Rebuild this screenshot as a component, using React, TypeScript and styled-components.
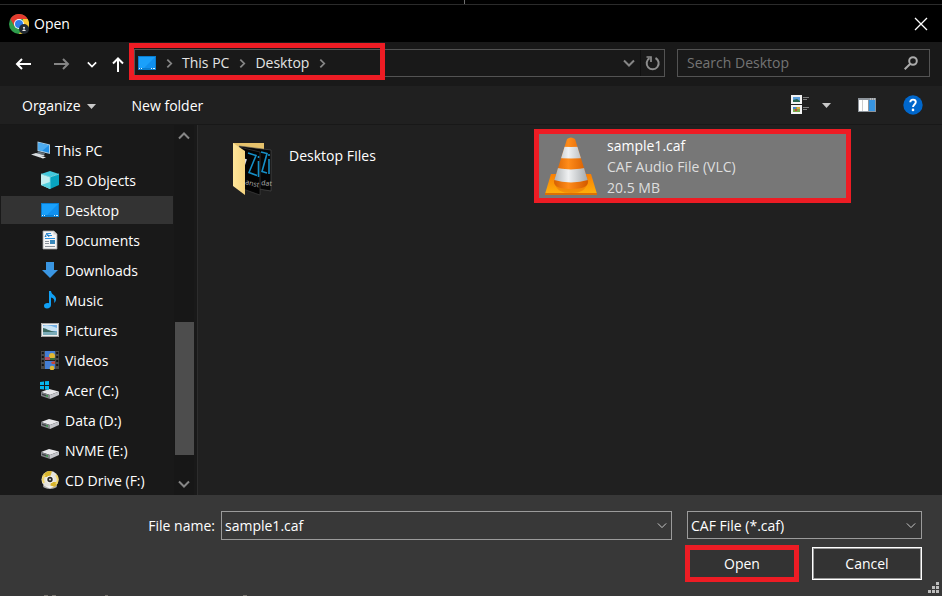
import React from "react";
import styled, { createGlobalStyle, css } from "styled-components";

const RED = "#ed1c24";

const GlobalStyle = createGlobalStyle`
  * { box-sizing: border-box; }
  body { margin: 0; background: #000; }
  body, button, input, select {
    font-family: "Open Sans", "Noto Sans", sans-serif;
    font-size: 14px;
    line-height: 20px;
    color: #fff;
  }
  button { padding: 0; border: 0; background: none; }
  svg { display: block; flex: none; }
`;

const Dialog = styled.main`
  position: relative;
  display: flex;
  flex-direction: column;
  height: 100vh;
  overflow: hidden;
  background: #202020;
`;

const TopEdge = styled.div`
  height: 5px;
  flex: none;
  display: flex;
  justify-content: center;
  padding-right: 14px;
  background: #000;
  border-bottom: 1px solid #2b2b2b;
`;

const EdgeTick = styled.span`
  width: 1px;
  height: 4px;
  background: #707070;
`;

const TitleBar = styled.header`
  height: 37px;
  flex: none;
  display: flex;
  align-items: center;
  gap: 5px;
  padding: 0 14px 0 9px;
  background: #000;
`;

const Title = styled.h1`
  flex: 1;
  margin: 0;
  font-size: 14px;
  font-weight: 400;
`;

const IconButton = styled.button`
  display: flex;
  align-items: center;
  justify-content: center;
`;

const NavBar = styled.nav`
  height: 44px;
  flex: none;
  display: flex;
  align-items: center;
  padding: 0 12px 2px 15px;
  background: #191919;
`;

const NavButtons = styled.div`
  display: flex;
  align-items: center;
  width: 119px;
  padding-top: 2px;
  gap: 23px;
`;

const NavTail = styled.div`
  display: flex;
  align-items: center;
  gap: 13px;
  margin-left: -6px;
`;

const AddressBar = styled.div`
  position: relative;
  flex: 1;
  height: 28px;
  display: flex;
  align-items: center;
  padding: 0 0 0 3px;
  border: 1px solid #535353;
`;

const Crumbs = styled.div`
  flex: 1;
  display: flex;
  align-items: center;
  gap: 10px;
`;

const CrumbButton = styled.button`
  margin-left: -1px;
  color: #e4e4e4;
`;

const RefreshButton = styled(IconButton)`
  width: 24px;
  height: 26px;
  margin-left: 5px;
  border-left: 1px solid #101010;
`;

const Highlight = styled.span<{ $area: "path" | "file" }>`
  position: absolute;
  border: 5px solid ${RED};
  pointer-events: none;
  ${(p) =>
    p.$area === "path"
      ? css`
          left: -6px;
          top: -7px;
          width: 256px;
          height: 37px;
        `
      : css`
          inset: -5px;
        `}
`;

const SearchBox = styled.label`
  width: 253px;
  height: 28px;
  margin-left: 12px;
  display: flex;
  align-items: center;
  padding: 0 11px 0 9px;
  border: 1px solid #535353;
`;

const SearchInput = styled.input`
  flex: 1;
  min-width: 0;
  padding: 0;
  border: 0;
  outline: 0;
  background: none;
  &::placeholder { color: #747474; opacity: 1; }
`;

const ToolBar = styled.div`
  height: 39px;
  flex: none;
  display: flex;
  align-items: center;
  padding: 2px 19px 0 22px;
  border-bottom: 1px solid #181818;
`;

const MenuButton = styled.button`
  display: flex;
  align-items: center;
  gap: 6px;
  margin-right: 36px;
`;

const ToolIcons = styled.div`
  display: flex;
  align-items: center;
  margin-left: auto;
  padding-bottom: 2px;
  gap: 27px;
`;

const ViewButton = styled(IconButton)`
  gap: 12px;
`;

const Body = styled.div`
  flex: 1;
  min-height: 0;
  display: flex;
`;

const Sidebar = styled.aside`
  width: 198px;
  flex: none;
  display: flex;
  background: #191919;
  border-right: 1px solid #2d2d2d;
`;

const Tree = styled.ul`
  flex: 1;
  display: flex;
  flex-direction: column;
  gap: 2px;
  margin: 0;
  padding: 11px 0 0 1px;
  list-style: none;
`;

const TreeItem = styled.button<{ $root?: boolean; $active?: boolean }>`
  width: 172px;
  height: 28px;
  display: flex;
  align-items: center;
  gap: ${(p) => (p.$root ? "4px" : "5px")};
  padding-left: ${(p) => (p.$root ? "30px" : "39px")};
  background: ${(p) => (p.$active ? "#333" : "transparent")};
`;

const TreeLabel = styled.span`
  padding-top: 2px;
`;

const ScrollTrack = styled.div`
  width: 20px;
  margin-right: 3px;
  display: flex;
  flex-direction: column;
  align-items: center;
  background: #171717;
  padding: 7px 0;
`;

const ScrollThumb = styled.div`
  width: 19px;
  height: 133px;
  margin: auto 0 25px;
  background: #4d4d4d;
`;

const FileGrid = styled.section`
  flex: 1;
  display: grid;
  grid-template-columns: repeat(auto-fill, 307px);
  grid-auto-rows: 64px;
  column-gap: 5px;
  padding: 9px 0 0 29px;
  overflow: hidden;
`;

const FileTile = styled.button<{ $selected?: boolean }>`
  position: relative;
  display: flex;
  align-items: ${(p) => (p.$selected ? "center" : "flex-start")};
  gap: 10px;
  padding-left: 6px;
  text-align: left;
  background: ${(p) => (p.$selected ? "#777" : "transparent")};
`;

const FolderName = styled.span`
  margin-top: 12px;
`;

const FileText = styled.span`
  display: flex;
  flex-direction: column;
  padding-top: 1px;
  line-height: 21px;
`;

const FileMeta = styled.span`
  color: #dedede;
`;

const Footer = styled.form`
  position: relative;
  height: 101px;
  flex: none;
  display: flex;
  flex-direction: column;
  gap: 5px;
  padding: 16px 20px 0 0;
  background: #383838;
`;

const FieldRow = styled.div`
  display: flex;
`;

const FieldLabel = styled.label`
  width: 221px;
  padding: 5px 6px 0 0;
  text-align: right;
`;

const NameField = styled.div`
  flex: 1;
  height: 29px;
  display: flex;
  align-items: center;
  padding: 0 4px 0 3px;
  border: 1px solid #9b9b9b;
`;

const NameInput = styled.input`
  flex: 1;
  min-width: 0;
  padding: 0;
  border: 0;
  outline: 0;
  background: none;
`;

const TypeField = styled.div`
  position: relative;
  width: 235px;
  margin-left: 15px;
`;

const TypeSelect = styled.select`
  appearance: none;
  width: 100%;
  height: 28px;
  padding: 2px 24px 0 3px;
  border: 1px solid #9b9b9b;
  border-radius: 0;
  background: #333;
  outline: 0;
`;

const SelectArrow = styled.span`
  position: absolute;
  right: 6px;
  top: 11px;
  pointer-events: none;
`;

const ButtonRow = styled.div`
  display: flex;
  align-items: center;
  justify-content: flex-end;
  gap: 13px;
`;

const ActionButton = styled.button<{ $primary?: boolean }>`
  background: #333;
  ${(p) =>
    p.$primary
      ? css`
          width: 114px;
          height: 37px;
          border: 5px solid ${RED};
        `
      : css`
          width: 110px;
          height: 33px;
          border: 1px solid #fff;
          box-shadow: inset 0 0 0 1px #9a9a9a;
        `}
`;

const Grip = styled.span`
  position: absolute;
  right: 3px;
  bottom: 3px;
`;

const BottomMarks = styled.span`
  position: absolute;
  left: 44px;
  bottom: 0;
`;

const Chevron = ({ dir, size = 11, color = "#868686", weight = 2 }: { dir: "up" | "down" | "right"; size?: number; color?: string; weight?: number }) => {
  const d = { up: "M1 6.5 6 1.5 11 6.5", down: "M1 1.5 6 6.5 11 1.5", right: "M1.5 1.500 6 6 1.5 10.500" }[dir];
  const right = dir === "right";
  const short = Math.round((size * 8) / 12);
  return (
    <svg width={right ? short : size} height={right ? size : short} viewBox={right ? "0 0 8 12" : "0 0 12 8"} fill="none" stroke={color} strokeWidth={weight}>
      <path d={d} />
    </svg>
  );
};

const Caret = () => (
  <svg width="9" height="5" viewBox="0 0 9 5"><path d="M0 0h9L4.500 5z" fill="#c8c8c8" /></svg>
);

const Arrow = ({ dir, color = "#fff" }: { dir: "left" | "right" | "up"; color?: string }) => {
  const d = {
    left: "M16 8H2.500M7 3 2 8 7 13",
    right: "M0 8h13.500M9 3 14 8 9 13",
    up: "M8 16V2.500M3 7.500 8 2.500 13 7.500",
  }[dir];
  return (
    <svg width="16" height="16" viewBox="0 0 16 16" fill="none" stroke={color} strokeWidth="2"><path d={d} /></svg>
  );
};

const ChromeIcon = () => (
  <svg width="20" height="20" viewBox="0 0 20 20">
    <circle cx="10" cy="10" r="10" fill="#2f9e4c" />
    <path d="M1.340 5A10 10 0 0 1 18.700 5H10L5.700 12.500z" fill="#e33b2e" />
    <path d="M18.700 5A10 10 0 0 1 10 20l4.300-7.500L14 5z" fill="#fcc934" />
    <circle cx="10" cy="10" r="5" fill="#fff" />
    <circle cx="10" cy="10" r="4" fill="#2f7de9" />
    <circle cx="15" cy="15" r="5" fill="#222a33" />
    <circle cx="15" cy="13.800" r="1.100" fill="#e8e8e8" />
    <path d="M13 17q2-3.500 4 0z" fill="#e8e8e8" />
  </svg>
);

const CloseIcon = () => (
  <svg width="14" height="14" viewBox="0 0 14 14" stroke="#fff" strokeWidth="1.300"><path d="M1 1 13 13M13 1 1 13" /></svg>
);

const RefreshIcon = () => (
  <svg width="16" height="16" viewBox="0 0 16 16" fill="none" stroke="#8c8c8c" strokeWidth="2">
    <path d="M10.500 3A6 6 0 1 1 4.500 3.200" />
    <path d="M1.500 2H6v5" strokeWidth="1.700" />
  </svg>
);

const SearchIcon = () => (
  <svg width="14" height="14" viewBox="0 0 14 14" fill="none" stroke="#aaa" strokeWidth="2">
    <circle cx="9" cy="5" r="3.800" /><path d="M6.300 7.700.700 13.300" />
  </svg>
);

const ViewIcon = () => (
  <svg width="19" height="20" viewBox="0 0 19 20">
    <path d="M0 0h11v9H0zM0 10h11v9H0z" fill="#f3f3f3" />
    <path d="M2 2h7v5H2z" fill="#5c9fdc" /><path d="M2 5 6 4l3 2v1H2z" fill="#286450" />
    <path d="M2 12h7v5H2z" fill="#79a84a" /><path d="M2 12h3v2H2z" fill="#4b83c6" /><path d="M6 12h3v2H6z" fill="#e0a33c" /><path d="M4 14h2v2H4z" fill="#c4463a" />
    <path d="M12 2.500h6M12 4.500h4M12 12.500h6M12 14.500h4" stroke="#808080" />
  </svg>
);

const PaneIcon = () => (
  <svg width="18" height="14" viewBox="0 0 18 14">
    <path d="M0 0h18v14H0z" fill="#8e959c" /><path d="M1 2h9v11H1z" fill="#fff" /><path d="M4.500 2v11" stroke="#ccc" />
    <path d="M11 2h6v11h-6z" fill="#3794e0" /><path d="M12 1h1M14 1h1M16 1h1" stroke="#ddd" />
  </svg>
);

const HelpIcon = () => (
  <svg width="20" height="20" viewBox="0 0 20 20">
    <circle cx="10" cy="10" r="9.700" fill="#0067cc" />
    <path d="M7.300 7.300C7.300 5.500 8.400 4.600 10 4.600s2.800.9 2.800 2.500c0 2.300-2.800 2.500-2.800 5" fill="none" stroke="#fff" strokeWidth="1.900" />
    <circle cx="10" cy="14.900" r="1.300" fill="#fff" />
  </svg>
);

const Icon18 = ({ children }: { children: React.ReactNode }) => (
  <svg width="20" height="20" viewBox="0 0 20 20">{children}</svg>
);

const PcIcon = () => (
  <Icon18>
    <path d="M6.500 1.500 19 4.500V14L6.500 11z" fill="#a8cce4" /><path d="M7.500 2.800 18 5.300V12.700L7.500 10z" fill="#2090e8" /><path d="M7.500 2.800 18 5.300 11 11 7.500 10z" fill="#4eacf0" />
    <path d="M7 11.500 14 13 13 15 6 13.500z" fill="#66727c" />
    <path d="M0 14.500 5 13 14 15.500 9 17.500z" fill="#d8dde0" /><path d="M9 17.500 12 16.500 15 17.300 12 18.500z" fill="#eee" />
  </Icon18>
);

const CubeIcon = () => (
  <Icon18>
    <path d="M1 4 10 1 19 4 10 7z" fill="#42c8dc" /><path d="M1 4 10 7V19L1 15z" fill="#c2eef0" /><path d="M19 4 10 7V19L19 15z" fill="#08a4c0" />
    <path d="M10 7v12M1 4 10 7 19 4" stroke="#80e0e9" strokeWidth=".8" fill="none" /><path d="M1 15 10 12V19z" fill="#54d1df" />
  </Icon18>
);

const ScreenShape = () => (
  <>
    <path d="M1 3h18v14H1z" fill="#087dd0" /><path d="M2 4h16v11H2z" fill="#1aa0fb" /><path d="M18 4v11H7z" fill="#108fee" />
    <path d="M2 15.500h1M4 15.500h1M14 15.500h1M16 15.500h2" stroke="#d8f0ff" />
  </>
);

const DesktopIcon = () => <Icon18><ScreenShape /></Icon18>;

const CrumbScreenIcon = () => (
  <svg width="18" height="14" viewBox="1 3 18 14"><ScreenShape /></svg>
);

const DocumentIcon = () => (
  <Icon18>
    <path d="M3 1h11l3 3v15H3z" fill="#f5f5f5" stroke="#a0a0a0" strokeWidth=".8" /><path d="M13.500 1v3.500H17" fill="#ccc" />
    <path d="M5 6.500h1.500M8 3.500h3M7 5.500h5M5 8.500h10" stroke="#268fe0" /><path d="m5 7 2-4 2 4" fill="none" stroke="#1572bd" />
    <path d="M5 11.500h4M5 13.500h4M5 16.500h10" stroke="#8a9199" /><path d="M10 10h5v4h-5z" fill="#3988bb" />
  </Icon18>
);

const DownloadIcon = () => (
  <Icon18><path d="M6 2h8v8h4l-8 8-8-8h4z" fill="#3a96e2" /></Icon18>
);

const MusicIcon = () => (
  <Icon18><path d="M9 1h2c.5 4 5 4 5 8 0 2-.8 3-2 4 1.200-4-.8-5-3-5.500V15c0 2-1.800 3.500-4 3.500S4 17.300 4 15.700C4 13.800 6.500 12.500 9 13.300z" fill="#10a0f5" /></Icon18>
);

const PictureIcon = () => (
  <Icon18>
    <path d="M1 3h18v14H1z" fill="#eee" /><path d="M1.500 3.500h17v13h-17z" fill="none" stroke="#a5a5a5" /><path d="M3 5h14v10H3z" fill="#73b1e6" />
    <path d="M3 6q5-2 14 2v3H3z" fill="#c8e3f5" /><path d="M3 8c3 0 5 3 14 4v1H3z" fill="#3c6960" /><path d="M3 12h14v3H3z" fill="#7bacb8" />
  </Icon18>
);

const VideoIcon = () => (
  <Icon18>
    <path d="M1 1h18v18H1z" fill="#484848" /><path d="M5 1h10v18H5z" fill="#447ed4" />
    <path d="M2.800 2v16M17.200 2v16" stroke="#111" strokeWidth="2" strokeDasharray="2 2" />
    <circle cx="12" cy="6" r="3" fill="#e0b832" /><path d="M5 7h5v3H5z" fill="#b34b62" /><path d="M10 8h5v2h-5z" fill="#356c3c" />
    <path d="M5 10.500h10" stroke="#222" /><path d="m11 12 4-1v3h-3z" fill="#c74637" /><circle cx="12" cy="18" r="2.300" fill="#e0b832" />
  </Icon18>
);

const DriveIcon = ({ system = false }: { system?: boolean }) => (
  <Icon18>
    <path d="M1 12 9 9 19 11.500 10 15z" fill="#e9e9ec" /><path d="M1 12 10 15V19L1 16z" fill="#84878c" /><path d="M19 11.500 10 15V19L19 15z" fill="#c3c5ca" />
    <path d="M2 13.500 8 15.500V17L2 15z" fill="#404448" /><path d="M6 16h2" stroke="#3bd053" />
    {system && <path d="M0 2 4 1.500V5H0zM5 1.300 9 1V5H5zM0 6h4v3.500L0 9zM5 6h4v4l-4-.4z" fill="#05b7ed" />}
  </Icon18>
);

const DiscIcon = () => (
  <Icon18>
    <ellipse cx="10" cy="16" rx="7" ry="3" fill="#aaa" /><circle cx="10" cy="9.500" r="8.500" fill="#e5e3dc" />
    <path d="M2 7a8.500 8.500 0 0 1 10-5.700L10 7zM18 12a8.500 8.500 0 0 1-8 6l1-6z" fill="#d8b52d" />
    <path d="M4 13A7 7 0 0 1 5 5M16 14a7 7 0 0 0 0-9" stroke="#f1d66b" fill="none" strokeWidth="2" />
    <circle cx="10" cy="9.500" r="3.800" fill="#f5f5f0" /><circle cx="10" cy="9.500" r="2.700" fill="#282828" /><circle cx="10" cy="9.500" r="1" fill="#ddd" />
    <path d="m6 16.500 4-1 4 1-4 2z" fill="#f1f1f1" />
  </Icon18>
);

const FolderIcon = () => (
  <svg width="46" height="62" viewBox="0 0 46 62">
    <defs><linearGradient id="folder" x2="1"><stop stopColor="#ffe69a" /><stop offset="1" stopColor="#f5d480" /></linearGradient></defs>
    <path d="M0 9h31v10H0z" fill="#e6c26c" />
    <path d="M6 12 38 16v41l-12-2z" fill="#050505" stroke="#555" strokeWidth=".6" />
    <path d="M6 13 27 18v43L10 55z" fill="#030303" stroke="#484848" strokeWidth=".6" />
    <g fill="none" stroke="#168fc7" strokeWidth="1.600">
      <path d="m15 19 8 2.500-7 17 8 3M25.500 27v16M25.500 22v2" />
      <path d="m28 18 6 1.500-5 18 5 1.500M36 25v15M36 20v2" />
    </g>
    <path d="m11 31 2-6" stroke="#ddd" strokeWidth="2" />
    <g fill="#b4b4b4" fontSize="7" fontFamily="Open Sans, sans-serif">
      <text x="12" y="50" transform="rotate(14 12 50)">anst</text>
      <text x="28" y="51" transform="rotate(6 28 51)">dat</text>
    </g>
    <path d="M0 9 12 17V61L0 52z" fill="url(#folder)" />
  </svg>
);

const ConeIcon = () => (
  <svg width="52" height="60" viewBox="0 0 52 60">
    <defs>
      <linearGradient id="orange" x2="1"><stop offset=".2" stopColor="#d96504" /><stop offset=".45" stopColor="#ff8c1a" /><stop offset=".8" stopColor="#d65d00" /></linearGradient>
      <linearGradient id="white" x2="1"><stop offset=".2" stopColor="#b4b8ba" /><stop offset=".45" stopColor="#eff1f2" /><stop offset=".8" stopColor="#a9adb0" /></linearGradient>
      <linearGradient id="base" x2="0" y2="1"><stop stopColor="#f77d04" /><stop offset="1" stopColor="#ffb30b" /></linearGradient>
      <clipPath id="cone"><path d="M22 3q4-3 8 0l13 42q1 8-17 8T9 45z" /></clipPath>
    </defs>
    <path d="M6 38h40l6 20q0 1-1 1H1q-1 0-1-1z" fill="url(#base)" /><path d="M0 57h52v2H0z" fill="#dc7105" />
    <path d="M10 47q1 10 16 10t16-10z" fill="#e77707" opacity=".55" />
    <g clipPath="url(#cone)">
      <path d="M0 0h52v60H0z" fill="url(#orange)" />
      <path d="M0 9q26 4 52 0v11q-26 5-52 0zM0 29q26 9 52 0v12q-26 11-52 0z" fill="url(#white)" />
    </g>
  </svg>
);

const GripIcon = () => (
  <svg width="11" height="11" viewBox="0 0 11 11"><path d="M8 0h3v3H8zM4 4h3v3H4zM8 4h3v3H8zM0 8h3v3H0zM4 8h3v3H4zM8 8h3v3H8z" fill="#bdbdbd" /></svg>
);

const places = [
  { name: "This PC", icon: <PcIcon />, root: true },
  { name: "3D Objects", icon: <CubeIcon /> },
  { name: "Desktop", icon: <DesktopIcon />, active: true },
  { name: "Documents", icon: <DocumentIcon /> },
  { name: "Downloads", icon: <DownloadIcon /> },
  { name: "Music", icon: <MusicIcon /> },
  { name: "Pictures", icon: <PictureIcon /> },
  { name: "Videos", icon: <VideoIcon /> },
  { name: "Acer (C:)", icon: <DriveIcon system /> },
  { name: "Data (D:)", icon: <DriveIcon /> },
  { name: "NVME (E:)", icon: <DriveIcon /> },
  { name: "CD Drive (F:)", icon: <DiscIcon /> },
];

export default function App() {
  return (
    <>
      <GlobalStyle />
      <Dialog>
        <TopEdge><EdgeTick /></TopEdge>
        <TitleBar>
          <ChromeIcon />
          <Title>Open</Title>
          <IconButton aria-label="Close"><CloseIcon /></IconButton>
        </TitleBar>
        <NavBar>
          <NavButtons>
            <IconButton aria-label="Back"><Arrow dir="left" /></IconButton>
            <IconButton aria-label="Forward"><Arrow dir="right" color="#858585" /></IconButton>
            <NavTail>
              <IconButton aria-label="Recent locations"><Chevron dir="down" size={10} color="#fff" /></IconButton>
              <IconButton aria-label="Up"><Arrow dir="up" /></IconButton>
            </NavTail>
          </NavButtons>
          <AddressBar>
            <Crumbs>
              <CrumbScreenIcon />
              <Chevron dir="right" />
              <CrumbButton>This PC</CrumbButton>
              <Chevron dir="right" />
              <CrumbButton>Desktop</CrumbButton>
              <Chevron dir="right" />
            </Crumbs>
            <IconButton aria-label="Previous locations"><Chevron dir="down" size={12} /></IconButton>
            <RefreshButton aria-label="Refresh"><RefreshIcon /></RefreshButton>
            <Highlight $area="path" />
          </AddressBar>
          <SearchBox>
            <SearchInput type="text" aria-label="Search Desktop" placeholder="Search Desktop" />
            <SearchIcon />
          </SearchBox>
        </NavBar>
        <ToolBar>
          <MenuButton>Organize <Caret /></MenuButton>
          <MenuButton>New folder</MenuButton>
          <ToolIcons>
            <ViewButton aria-label="Change view"><ViewIcon /><Caret /></ViewButton>
            <IconButton aria-label="Preview pane"><PaneIcon /></IconButton>
            <IconButton aria-label="Help"><HelpIcon /></IconButton>
          </ToolIcons>
        </ToolBar>
        <Body>
          <Sidebar>
            <Tree>
              {places.map((p) => (
                <li key={p.name}>
                  <TreeItem $root={p.root} $active={p.active}>
                    {p.icon}
                    <TreeLabel>{p.name}</TreeLabel>
                  </TreeItem>
                </li>
              ))}
            </Tree>
            <ScrollTrack>
              <Chevron dir="up" size={12} />
              <ScrollThumb />
              <Chevron dir="down" size={12} />
            </ScrollTrack>
          </Sidebar>
          <FileGrid>
            <FileTile>
              <FolderIcon />
              <FolderName>Desktop FIles</FolderName>
            </FileTile>
            <FileTile $selected>
              <ConeIcon />
              <FileText>
                <span>sample1.caf</span>
                <FileMeta>CAF Audio File (VLC)</FileMeta>
                <FileMeta>20.5 MB</FileMeta>
              </FileText>
              <Highlight $area="file" />
            </FileTile>
          </FileGrid>
        </Body>
        <Footer onSubmit={(e) => e.preventDefault()}>
          <FieldRow>
            <FieldLabel htmlFor="file-name">File name:</FieldLabel>
            <NameField>
              <NameInput id="file-name" type="text" defaultValue="sample1.caf" />
              <IconButton type="button" aria-label="Recent file names"><Chevron dir="down" size={10} color="#c8c8c8" weight={1.2} /></IconButton>
            </NameField>
            <TypeField>
              <TypeSelect aria-label="File type"><option>CAF File (*.caf)</option></TypeSelect>
              <SelectArrow><Chevron dir="down" size={10} color="#c8c8c8" weight={1.2} /></SelectArrow>
            </TypeField>
          </FieldRow>
          <ButtonRow>
            <ActionButton $primary type="submit">Open</ActionButton>
            <ActionButton type="button">Cancel</ActionButton>
          </ButtonRow>
          <BottomMarks>
            <svg width="206" height="1" viewBox="0 0 206 1"><path d="M0 0h4v1H0zM8 0h4v1H8zM61 0h3v1h-3zM199 0h4v1h-4z" fill="#77736d" /></svg>
          </BottomMarks>
          <Grip><GripIcon /></Grip>
        </Footer>
      </Dialog>
    </>
  );
}
